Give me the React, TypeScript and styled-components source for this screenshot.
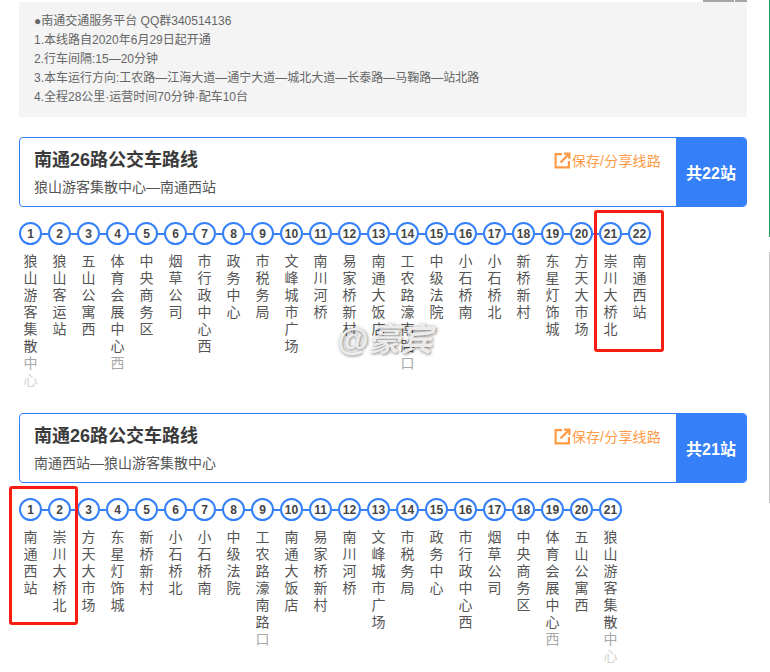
import React from "react";
import styled, { createGlobalStyle } from "styled-components";

const GlobalStyle = createGlobalStyle`
  html, body { margin: 0; padding: 0; background: #fff; }
  body { font-family: "Liberation Sans", "Noto Sans CJK SC", sans-serif; }
`;

const Page = styled.div`
  position: relative;
  width: 770px;
  height: 672px;
  box-sizing: border-box;
  padding: 2px 23px 0 19px;
  overflow: hidden;
`;

const TopStrip = styled.div`
  position: absolute;
  top: 0;
  left: 703px;
  width: 44px;
  height: 2px;
  background: linear-gradient(to right, #a6a6a6 0 31px, #fff 31px 32px, #a6a6a6 32px);
`;

const EdgeBar = styled.div<{ $top: number; $height: number; $color: string }>`
  position: absolute;
  right: 0;
  top: ${(p) => p.$top}px;
  width: 1px;
  height: ${(p) => p.$height}px;
  background: ${(p) => p.$color};
`;

const Notice = styled.div`
  height: 115px;
  box-sizing: border-box;
  padding: 10px 15px;
  background: #f4f4f4;
  color: #666;
  font-size: 12px;
  line-height: 19px;
`;

const Route = styled.section`
  margin-top: 20px;
  & + & { margin-top: 24px; }
`;

const Card = styled.div`
  display: flex;
  height: 70px;
  box-sizing: border-box;
  border: 1px solid #3580f8;
  border-radius: 4px;
  overflow: hidden;
`;

const CardBody = styled.div`
  flex: 1;
  min-width: 0;
  padding: 7px 15px 0 14px;
`;

const TitleRow = styled.div`
  display: flex;
  align-items: center;
  justify-content: space-between;
  height: 26px;
`;

const Title = styled.h2`
  margin: 0;
  font-size: 18px;
  font-weight: 700;
  color: #3a3a3a;
`;

const SaveLink = styled.a`
  display: flex;
  align-items: center;
  gap: 1px;
  padding-top: 4px;
  font-size: 14px;
  letter-spacing: 0.2px;
  color: #ff9b47;
`;

const Subtitle = styled.p`
  margin: 6px 0 0;
  font-size: 14px;
  line-height: 20px;
  color: #555;
`;

const Count = styled.div`
  flex: 0 0 70px;
  display: flex;
  align-items: center;
  justify-content: center;
  background: #3580f8;
  color: #fff;
  font-size: 16px;
  font-weight: 700;
`;

const Stations = styled.ol`
  display: flex;
  list-style: none;
  margin: 15px 0 0 -3px;
  padding: 0;
`;

const Station = styled.li`
  flex: 0 0 29px;
  display: flex;
  flex-direction: column;
  align-items: center;
`;

const Head = styled.div`
  display: flex;
  align-items: center;
  width: 29px;
`;

const Connector = styled.span<{ $hidden: boolean }>`
  flex: 1;
  height: 2px;
  background: ${(p) => (p.$hidden ? "transparent" : "#3580f8")};
`;

const Dot = styled.span`
  flex: 0 0 23px;
  height: 23px;
  box-sizing: border-box;
  display: flex;
  align-items: center;
  justify-content: center;
  border: 2.5px solid #3580f8;
  border-radius: 50%;
  background: #fff;
  color: #444;
  font-size: 12px;
  font-weight: 700;
`;

const Name = styled.div`
  margin-top: 8px;
  font-size: 14px;
  line-height: 17px;
  text-align: center;
`;

const Glyph = styled.span<{ $index: number }>`
  display: block;
  color: ${(p) => (p.$index >= 7 ? "#d2d2d2" : p.$index === 6 ? "#a8a8a8" : "#555")};
`;

const Highlight = styled.div<{ $x: number; $y: number; $w: number; $h: number }>`
  position: absolute;
  left: ${(p) => p.$x}px;
  top: ${(p) => p.$y}px;
  width: ${(p) => p.$w}px;
  height: ${(p) => p.$h}px;
  box-sizing: border-box;
  border: 3px solid #fa1c10;
  border-radius: 3px;
`;

const Watermark = styled.div`
  position: absolute;
  left: 337px;
  top: 318px;
  font-size: 32px;
  line-height: 44px;
  font-weight: 700;
  font-style: italic;
  color: rgba(244, 244, 244, 0.92);
  text-shadow: 1px 1px 3px rgba(0, 0, 0, 0.4), 0 0 4px rgba(0, 0, 0, 0.2);
  white-space: nowrap;
`;

const ShareIcon = () => (
  <svg width="17" height="17" viewBox="0 0 17 17" fill="none" stroke="#ff9b47" strokeWidth="2.2">
    <path d="M8 2.1H1.6v13.3h13.3V9" />
    <path d="M6.5 10.5 14.6 2.4" />
    <path d="M10 1.6h5.4V7" />
  </svg>
);

const outbound = [
  "狼山游客集散中心", "狼山客运站", "五山公寓西", "体育会展中心西", "中央商务区", "烟草公司",
  "市行政中心西", "政务中心", "市税务局", "文峰城市广场", "南川河桥", "易家桥新村",
  "南通大饭店", "工农路濠南路口", "中级法院", "小石桥南", "小石桥北", "新桥新村",
  "东星灯饰城", "方天大市场", "崇川大桥北", "南通西站",
];

const inbound = [
  "南通西站", "崇川大桥北", "方天大市场", "东星灯饰城", "新桥新村", "小石桥北",
  "小石桥南", "中级法院", "工农路濠南路口", "南通大饭店", "易家桥新村", "南川河桥",
  "文峰城市广场", "市税务局", "政务中心", "市行政中心西", "烟草公司", "中央商务区",
  "体育会展中心西", "五山公寓西", "狼山游客集散中心",
];

const notes = [
  "●南通交通服务平台 QQ群340514136",
  "1.本线路自2020年6月29日起开通",
  "2.行车间隔:15—20分钟",
  "3.本车运行方向:工农路—江海大道—通宁大道—城北大道—长泰路—马鞠路—站北路",
  "4.全程28公里·运营时间70分钟·配车10台",
];

const RouteBlock = ({ subtitle, stops }: { subtitle: string; stops: string[] }) => (
  <Route>
    <Card>
      <CardBody>
        <TitleRow>
          <Title>南通26路公交车路线</Title>
          <SaveLink>
            <ShareIcon />
            保存/分享线路
          </SaveLink>
        </TitleRow>
        <Subtitle>{subtitle}</Subtitle>
      </CardBody>
      <Count>共{stops.length}站</Count>
    </Card>
    <Stations>
      {stops.map((stop, i) => (
        <Station key={stop}>
          <Head>
            <Connector $hidden={i === 0} />
            <Dot>{i + 1}</Dot>
            <Connector $hidden={i === stops.length - 1} />
          </Head>
          <Name>
            {Array.from(stop).map((ch, j) => (
              <Glyph key={j} $index={j}>{ch}</Glyph>
            ))}
          </Name>
        </Station>
      ))}
    </Stations>
  </Route>
);

export default function App() {
  return (
    <Page>
      <GlobalStyle />
      <TopStrip />
      <EdgeBar $top={0} $height={237} $color="#1fa463" />
      <EdgeBar $top={252} $height={251} $color="#c4c4c4" />
      <Notice>
        {notes.map((n) => (
          <div key={n}>{n}</div>
        ))}
      </Notice>
      <RouteBlock subtitle="狼山游客集散中心—南通西站" stops={outbound} />
      <RouteBlock subtitle="南通西站—狼山游客集散中心" stops={inbound} />
      <Highlight $x={594} $y={210} $w={70} $h={142} />
      <Highlight $x={9} $y={486} $w={69} $h={139} />
      <Watermark>@豪宾</Watermark>
    </Page>
  );
}
